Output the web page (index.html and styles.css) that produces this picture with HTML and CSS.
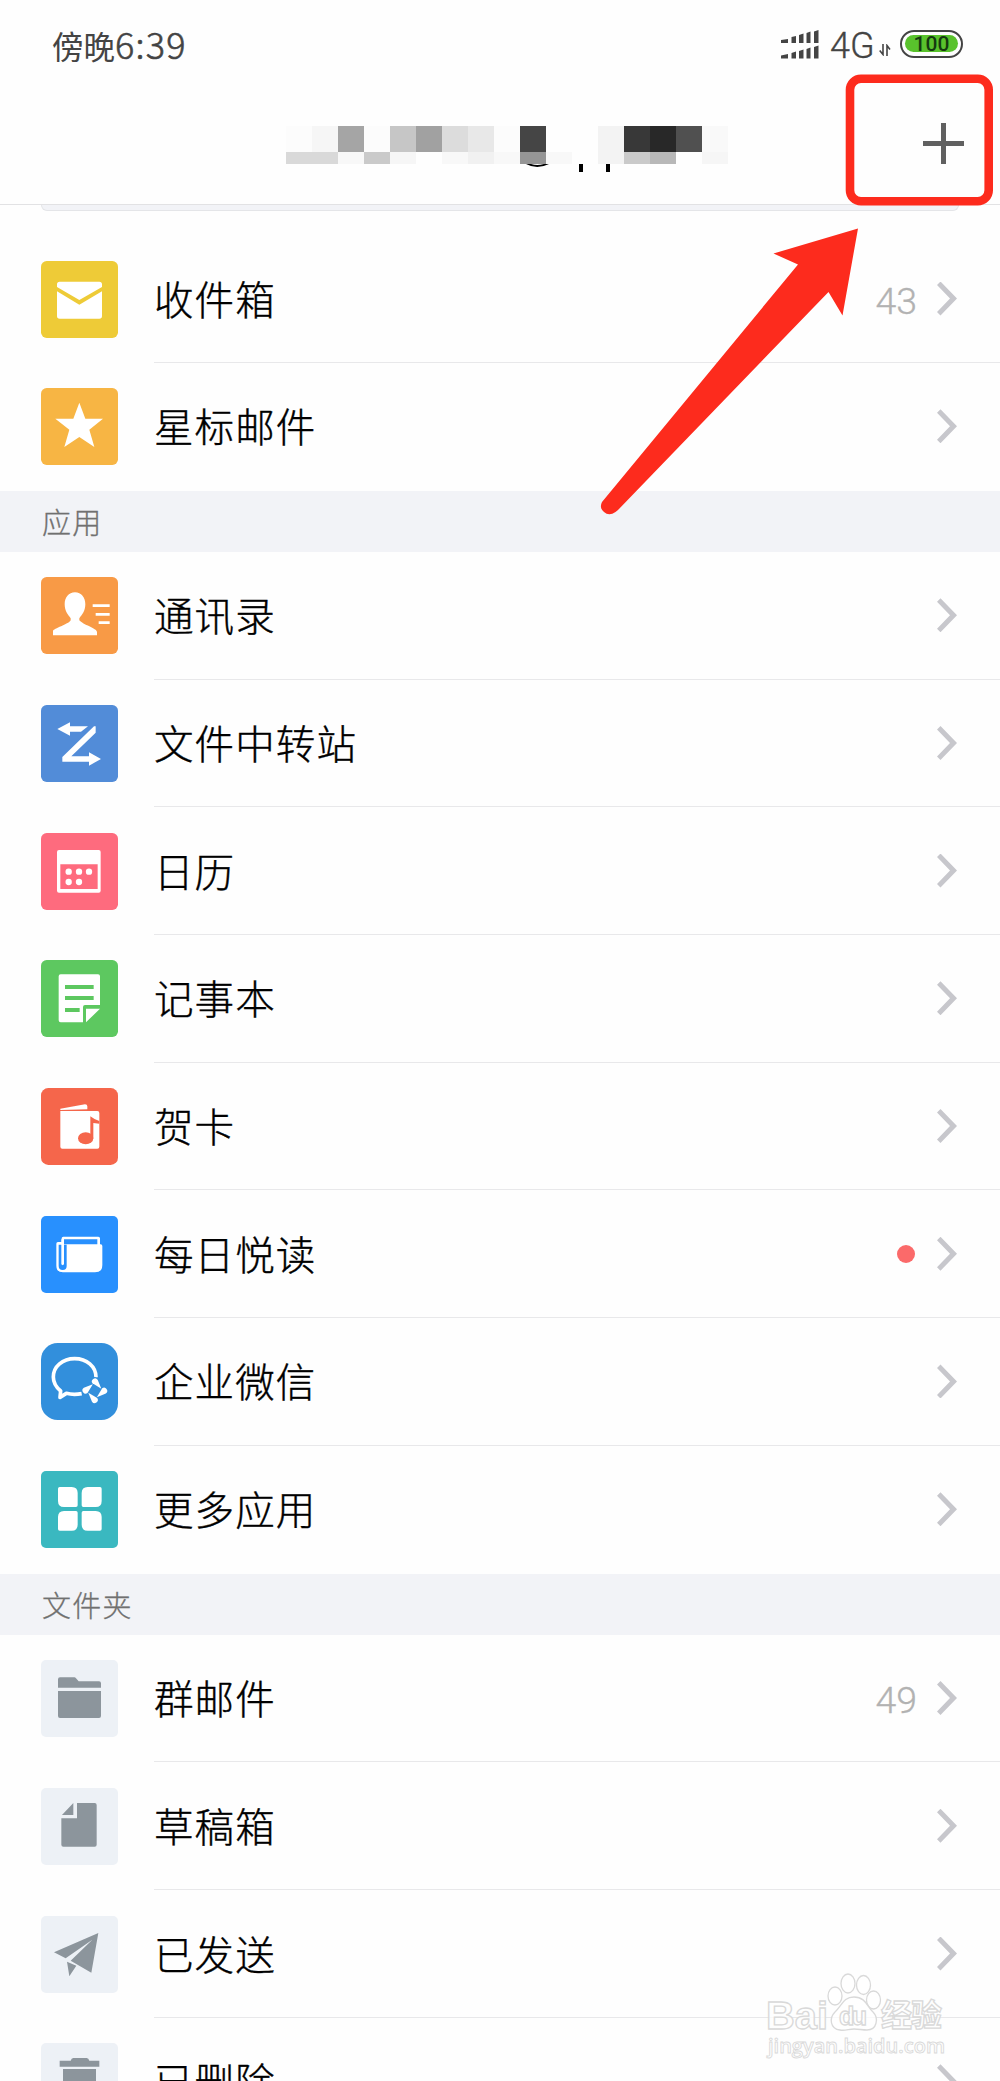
FILE: index.html
```html
<!DOCTYPE html>
<html lang="zh-CN">
<head>
<meta charset="utf-8">
<title>邮箱</title>
<link rel="stylesheet" href="styles.css">
</head>
<body>
<div class="screen">
  <div class="status">
    <div class="clock">傍晚<span class="digits">6:39</span></div>
    <div class="indicators">
      <svg class="signal" viewBox="0 0 38 30" width="38" height="30"><path d="M0 10l7-1v4H0zM10.500 7l4.500-1v7h-4.500zM18 5l4.500-1.500V13H18zM25.500 3l4-1.500V13h-4zM33 1.500L37.500 0v13H33zM0 25.500l7-1.500v4.500H0zM10.500 23l4.500-1.500v7h-4.500zM18 21l4.500-1.500v9H18zM25.500 19l4-1.500v11h-4zM33 17l4.500-1.500v13H33z"/></svg>
      <span class="net">4G</span>
      <svg class="updown" viewBox="0 0 12 12" width="12" height="12"><path d="M4 0v10.500L.7 6.500M8 12V1.500l3 4" fill="none" stroke="#444" stroke-width="1.600"/></svg>
      <div class="battery"><span>100</span></div>
    </div>
  </div>
  <div class="nav">
    <svg class="mosaic" viewBox="0 0 442 48" width="442" height="48" shape-rendering="crispEdges">
      <g>
        <path fill="#fcfcfc" d="M0 0h26v26H0zM78 0h26v26H78zM208 0h26v26h-26z"/><path fill="#f6f6f6" d="M26 0h26v26H26z"/><path fill="#a5a5a5" d="M52 0h26v26H52z"/><path fill="#c6c6c6" d="M104 0h26v26h-26z"/><path fill="#a1a1a1" d="M130 0h26v26h-26z"/><path fill="#dcdcdc" d="M156 0h26v26h-26z"/><path fill="#e8e8e8" d="M182 0h26v26h-26z"/><path fill="#454545" d="M234 0h26v26h-26z"/><path fill="#f3f3f3" d="M312 0h26v38h-26z"/><path fill="#383838" d="M338 0h26v26h-26z"/><path fill="#282828" d="M364 0h26v26h-26z"/><path fill="#505050" d="M390 0h26v26h-26z"/><path fill="#f9f9f9" d="M416 0h26v26h-26z"/>
        <path fill="#d9d9d9" d="M0 26h52v12H0z"/><path fill="#f8f8f8" d="M52 26h26v12H52zM156 26h26v12h-26zM208 26h26v12h-26zM260 26h26v12h-26z"/><path fill="#cacaca" d="M78 26h26v12H78zM338 26h26v12h-26z"/><path fill="#f6f6f6" d="M104 26h26v12h-26zM416 26h26v12h-26z"/><path fill="#f1f1f1" d="M182 26h26v12h-26z"/><path fill="#959595" d="M234 26h26v12h-26z"/><path fill="#b8b8b8" d="M364 26h26v12h-26z"/>
      </g>
      <path shape-rendering="auto" d="M240 38q11 6 23 0l-5 0q-7 2-13 0zM293 38h4v8h-4zM320 38h4v8h-4z"/>
    </svg>
    <svg class="plus" viewBox="0 0 41 41" width="41" height="41"><path d="M20.500 0v41M0 20.500h41" stroke="#606060" stroke-width="5"/></svg>
  </div>
  <div class="search-edge"></div>

  <ul class="list">
    <li class="row"><svg class="icon" viewBox="0 0 231 231"><rect width="231" height="231" rx="17" fill="#eecb37"/><path fill="#fff" d="M48 78V70q0-8 8-8h119q8 0 8 8v8l-68 39zM48 91l67 40 68-40v74q0 8-8 8H56q-8 0-8-8z"/></svg><div class="cell"><span class="name">收件箱</span><span class="count">43</span><i class="chev"></i></div></li>
    <li class="row last"><svg class="icon" viewBox="0 0 231 231"><rect width="231" height="231" rx="17" fill="#f7b544"/><path fill="#fff" d="M115 44l18 48h53l-41 33 15 52-45-30-45 30 15-52-42-33h54z"/></svg><div class="cell"><span class="name">星标邮件</span><i class="chev"></i></div></li>
  </ul>
  <h2 class="section">应用</h2>
  <ul class="list">
    <li class="row"><svg class="icon" viewBox="0 0 231 231"><rect width="231" height="231" rx="17" fill="#f89a46"/><path fill="#fff" d="M102 46c19 0 31 15 31 36 0 20-10 31-18 42v6c10 13 53 24 53 35v10H36v-14c8-9 52-22 53-32v-5c-8-11-18-22-18-42 0-21 12-36 31-36z"/><path stroke="#fff" stroke-width="8" d="M155 86h51M164 112h42M173 137h33"/></svg><div class="cell"><span class="name">通讯录</span><i class="chev"></i></div></li>
    <li class="row"><svg class="icon" viewBox="0 0 231 231"><rect width="231" height="231" rx="17" fill="#528cd8"/><path fill="#fff" d="M49 72l38-20v12h54l-21 16H87v12zM159 64h5v19l-73 71h53v-12l36 20-36 20v-12H64v-14z"/></svg><div class="cell"><span class="name">文件中转站</span><i class="chev"></i></div></li>
    <li class="row"><svg class="icon" viewBox="0 0 231 231"><rect width="231" height="231" rx="17" fill="#fe6b7e"/><rect x="48" y="51" width="131" height="128" rx="6" fill="#fff"/><path fill="#fe6b7e" d="M58 94h112v74H58z"/><g fill="#fff"><circle cx="83" cy="116" r="9.500"/><circle cx="114" cy="116" r="9.500"/><circle cx="144" cy="116" r="9.500"/><circle cx="83" cy="147" r="9.500"/><circle cx="114" cy="147" r="9.500"/></g></svg><div class="cell"><span class="name">日历</span><i class="chev"></i></div></li>
    <li class="row"><svg class="icon" viewBox="0 0 231 231"><rect width="231" height="231" rx="17" fill="#5dc860"/><path fill="#fff" d="M59 43h112q6 0 6 6v86h-45q-6 0-6 6v46H59q-6 0-6-6V49q0-6 6-6zM135 146h42l-42 41z"/><path stroke="#5dc860" stroke-width="12" d="M72 81h86M72 114h86M72 150h44"/></svg><div class="cell"><span class="name">记事本</span><i class="chev"></i></div></li>
    <li class="row"><svg class="icon" viewBox="0 0 231 231"><rect width="231" height="231" rx="22" fill="#f5664b"/><path fill="#fff" d="M58 62l74-13q7 0 7 6v9l-81 2zM58 69h111q6 0 6 6v101q0 6-6 6H64q-6 0-6-6z"/><path fill="#f5664b" d="M148 85q14 11 27 14v8l-18-2v46h-9z"/><ellipse cx="134" cy="151" rx="23" ry="18" fill="#f5664b"/></svg><div class="cell"><span class="name">贺卡</span><i class="chev"></i></div></li>
    <li class="row"><svg class="icon" viewBox="0 0 231 231"><rect width="231" height="231" rx="15" fill="#2890fe"/><path fill="#fff" d="M46 83q0-5 5-5h11V67q0-5 5-5h105q5 0 5 5v18h2q5 0 5 5v57q0 22-22 22H66q-20 0-20-20z"/><path fill="#2890fe" d="M53 86h24v64a12 12 0 0 1-24 0zM69 70h100v15H69z"/><path fill="#fff" d="M61 70h8v75q-4 5-8 0z"/></svg><div class="cell"><span class="name">每日悦读</span><b class="dot"></b><i class="chev"></i></div></li>
    <li class="row"><svg class="icon" viewBox="0 0 231 231"><rect width="231" height="231" rx="50" fill="#328fdc"/><path fill="none" stroke="#fff" stroke-width="11" stroke-linejoin="round" d="M165 103C165 70 137 47 101 47 65 47 37 70 37 102c0 18 10 32 22 42l-2 19 19-12c15 4 30 4 46 1"/><path fill="#328fdc" d="M161.500 101l42 42-42 42-42-42z"/><g fill="#fff"><path id="drop" d="M181 137L154.500 121A9.500 9.500 0 1 1 170 110z"/><use href="#drop" transform="rotate(90 161.500 143)"/><use href="#drop" transform="rotate(180 161.500 143)"/><use href="#drop" transform="rotate(270 161.500 143)"/></g></svg><div class="cell"><span class="name">企业微信</span><i class="chev"></i></div></li>
    <li class="row last"><svg class="icon" viewBox="0 0 231 231"><rect width="231" height="231" rx="15" fill="#3ab8c0"/><path fill="#fff" d="M56 48h36q18 0 18 18v37q0 5-5 5H69q-18 0-18-18V53q0-5 5-5zM140 48h37q5 0 5 5v37q0 18-18 18h-37q-5 0-5-5V66q0-18 18-18zM69 120h36q5 0 5 5v36q0 18-18 18H56q-5 0-5-5v-36q0-18 18-18zM127 120h37q18 0 18 18v36q0 5-5 5h-37q-18 0-18-18v-36q0-5 5-5z"/></svg><div class="cell"><span class="name">更多应用</span><i class="chev"></i></div></li>
  </ul>
  <h2 class="section">文件夹</h2>
  <ul class="list folders">
    <li class="row"><svg class="icon" viewBox="0 0 231 231"><rect width="231" height="231" rx="15" fill="#edf1f6"/><path fill="#8c959c" d="M57 52h43q3 0 5 3l8 9h61q6 0 6 6v13H51V58q0-6 6-6zM51 93h129v75q0 6-6 6H57q-6 0-6-6z"/></svg><div class="cell"><span class="name">群邮件</span><span class="count">49</span><i class="chev"></i></div></li>
    <li class="row"><svg class="icon" viewBox="0 0 231 231"><rect width="231" height="231" rx="15" fill="#edf1f6"/><path fill="#8c959c" d="M108 45h53q6 0 6 6v119q0 6-6 6H67q-6 0-6-6V91h47zM97 45v36H63z"/></svg><div class="cell"><span class="name">草稿箱</span><i class="chev"></i></div></li>
    <li class="row"><svg class="icon" viewBox="0 0 231 231"><rect width="231" height="231" rx="15" fill="#edf1f6"/><path fill="#8c959c" d="M172 51L39 109l35 18 80-56-65 63 62 36zM78 137l28 12-21 32z"/></svg><div class="cell"><span class="name">已发送</span><i class="chev"></i></div></li>
    <li class="row"><svg class="icon" viewBox="0 0 231 231"><rect width="231" height="231" rx="15" fill="#edf1f6"/><path fill="#8c959c" d="M56 53h33q2-8 8-8h40q6 0 8 8h30v18H56zM66 78h99v92q0 6-6 6H72q-6 0-6-6z"/></svg><div class="cell"><span class="name">已删除</span><i class="chev"></i></div></li>
  </ul>

  <svg class="callout" viewBox="0 0 1000 540" width="1000" height="540">
    <rect x="850" y="78.700" width="138.700" height="122.600" rx="11" fill="none" stroke="#fd2b1d" stroke-width="8.600"/>
    <path fill="#fd2b1d" d="M858 228.500L773.500 253.500 798 264.500 602 502Q599 508 604 512 609 516.500 615.500 512L618 510 828.500 292 842.500 315.500z"/>
  </svg>
  <svg class="watermark" viewBox="0 0 200 121" width="200" height="121">
    <g fill="#fff" fill-opacity=".75" stroke="#d9d9d9" stroke-width="1.300">
      <text x="6" y="69" font-size="38" font-weight="700" font-family="Liberation Sans" textLength="62" lengthAdjust="spacingAndGlyphs">Bai</text>
      <ellipse cx="75" cy="36" rx="7" ry="9"/><ellipse cx="88" cy="23.500" rx="7" ry="9.500"/><ellipse cx="103.500" cy="25" rx="7" ry="9.500"/><ellipse cx="113.500" cy="40" rx="7" ry="9"/>
      <path d="M94 37c12 0 13 10 19 15 6 6 4 18-6 18-5 0-8-1-13-1s-9 2-14 1c-10-1-11-12-5-18 7-6 8-15 19-15z"/>
      <text x="79" y="65" font-size="25" font-weight="700" font-family="Liberation Sans" textLength="28">du</text>
      <text x="121" y="66" font-size="31" font-weight="700" font-family="Noto Sans CJK SC" textLength="61">经验</text>
      <text x="8" y="93" font-size="20" font-weight="600" font-family="Open Sans" stroke-width=".900" textLength="177" lengthAdjust="spacingAndGlyphs">jingyan.baidu.com</text>
    </g>
  </svg>
</div>
</body>
</html>
```
FILE: styles.css
```css
* { box-sizing: border-box; }
body { margin: 0; background: #fefefe; }
.screen {
  position: relative;
  width: 1000px;
  height: 2081px;
  overflow: hidden;
  background: #fefefe;
  font-family: Roboto, "Noto Sans CJK SC", sans-serif;
  font-weight: 300;
  color: #000;
}

.status {
  height: 90px;
  padding: 0 37px 0 52px;
  display: flex;
  align-items: center;
  justify-content: space-between;
  color: #444;
}
.clock {
  font-family: "Noto Sans CJK SC", sans-serif;
  font-weight: 400;
  font-size: 31.500px;
  line-height: 50px;
  padding-bottom: 3px;
}
.digits { font-size: 36px; font-weight: 300; letter-spacing: 1.200px; -webkit-text-stroke: .6px #444; }
.indicators { display: flex; align-items: center; padding-bottom: 3px; }
.signal { fill: #444; margin-top: 3px; }
.net {
  font-size: 36px;
  line-height: 40px;
  margin-left: 11px;
  margin-top: 4px;
  width: 46px;
  -webkit-text-stroke: .3px #444;
}
.updown { margin: 13px 9px 0 3px; }
.battery {
  width: 63px;
  height: 28px;
  padding: 3px;
  border: 2.500px solid #444;
  border-radius: 14px;
}
.battery span {
  display: block;
  height: 17px;
  border-radius: 9px;
  background: #59c22c;
  color: #153a10;
  font: 500 21px/18px Roboto, sans-serif;
  text-align: center;
}

.nav {
  height: 115px;
  display: flex;
  justify-content: space-between;
  align-items: flex-start;
  padding: 33px 36px 0 286px;
  border-bottom: 1px solid #e2e2e4;
}
.mosaic { margin-top: 3px; }
.search-edge {
  height: 6px;
  margin: 0 41px 24.200px;
  background: #f2f3f7;
  border: 1px solid #e4e5e8;
  border-top: 0;
  border-radius: 0 0 6px 6px;
}

.list { list-style: none; margin: 0; padding: 0; }
.row {
  height: 127.730px;
  padding-left: 41px;
  display: flex;
  align-items: center;
}
.icon { width: 77px; height: 77px; flex: none; margin-right: 36px; }
.cell {
  flex: 1;
  height: 100%;
  display: flex;
  align-items: center;
  padding-right: 43px;
  border-bottom: 1.500px solid #e8e8ea;
}
.last .cell { border-bottom-color: transparent; }
.name {
  flex: 1;
  font-family: "Noto Sans CJK SC", sans-serif;
  font-size: 39.500px;
  letter-spacing: 1.100px;
  line-height: 58px;
  padding-bottom: 2px;
  -webkit-text-stroke: .4px #000;
}
.count {
  font-size: 37.500px;
  line-height: 44px;
  color: #b2b2b2;
  margin: 4px 20px 0 0;
  -webkit-text-stroke: .3px #b2b2b2;
}
.dot { width: 18px; height: 18px; border-radius: 50%; background: #fb6a6a; margin-right: 22px; }
.chev {
  width: 20px;
  height: 34px;
  background: #c7c7cc;
  clip-path: polygon(0 3.500px, 3.500px 0, 20px 17px, 3.500px 34px, 0 30.500px, 13px 17px);
}
.section {
  height: 61.200px;
  margin: 0;
  padding-left: 42px;
  background: #f2f3f7;
  color: #707070;
  font: 300 29px/60px "Noto Sans CJK SC", sans-serif;
  letter-spacing: 1.300px;
  -webkit-text-stroke: .3px #707070;
}

.callout { position: absolute; left: 0; top: 0; }
.watermark { position: absolute; left: 760px; top: 1960px; }
```
